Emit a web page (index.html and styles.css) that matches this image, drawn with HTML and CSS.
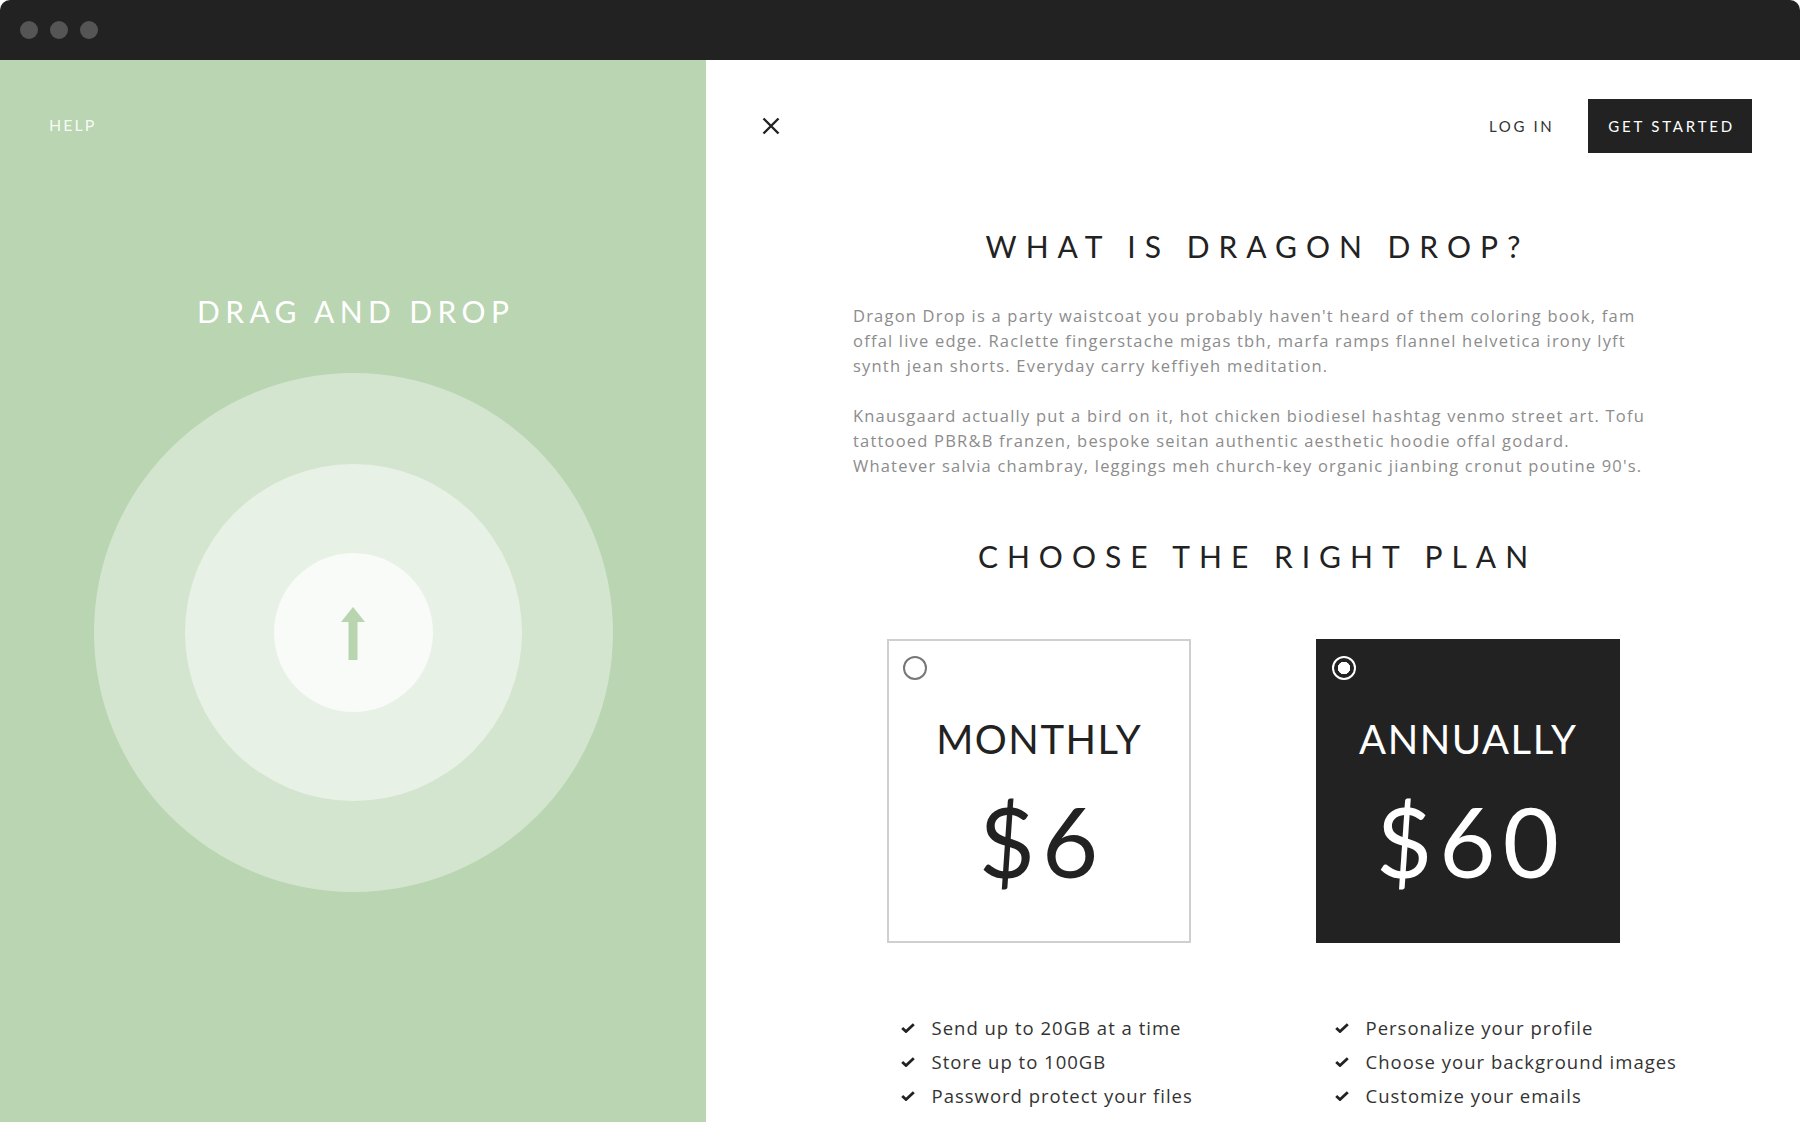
FILE: index.html
```html
<!DOCTYPE html>
<html>
<head>
<meta charset="utf-8">
<link rel="stylesheet" href="styles.css">
</head>
<body>
<div class="window">
  <div class="titlebar">
    <span class="dot"></span><span class="dot"></span><span class="dot"></span>
  </div>
  <div class="main">
    <aside class="side">
      <div class="help">HELP</div>
      <h2 class="side-title">DRAG AND DROP</h2>
      <div class="ring ring-outer">
        <div class="ring ring-mid">
          <div class="ring ring-inner">
            <svg class="arrow" width="24" height="53" viewBox="0 0 24 53"><path d="M12 0 L24 15 L16.5 15 L16.5 53 L7.5 53 L7.5 15 L0 15 Z" fill="#b9d5b0"/></svg>
          </div>
        </div>
      </div>
    </aside>
    <section class="content">
      <header class="topnav">
        <svg class="close" width="18" height="18" viewBox="0 0 18 18"><path d="M1.5 1.5 L16.5 16.5 M16.5 1.5 L1.5 16.5" stroke="#222" stroke-width="2.4" fill="none"/></svg>
        <nav class="navlinks">
          <a class="login">LOG IN</a>
          <a class="btn">GET STARTED</a>
        </nav>
      </header>
      <div class="body">
        <h1 class="heading">WHAT IS DRAGON DROP?</h1>
        <p class="para">Dragon Drop is a party waistcoat you probably haven't heard of them coloring book, fam<br>offal live edge. Raclette fingerstache migas tbh, marfa ramps flannel helvetica irony lyft<br>synth jean shorts. Everyday carry keffiyeh meditation.</p>
        <p class="para">Knausgaard actually put a bird on it, hot chicken biodiesel hashtag venmo street art. Tofu<br>tattooed PBR&amp;B franzen, bespoke seitan authentic aesthetic hoodie offal godard.<br>Whatever salvia chambray, leggings meh church-key organic jianbing cronut poutine 90's.</p>
        <h1 class="heading heading-plan">CHOOSE THE RIGHT PLAN</h1>
        <div class="plans">
          <div class="plan-col">
            <div class="card">
              <span class="radio"></span>
              <div class="card-title">MONTHLY</div>
              <div class="price">$6</div>
            </div>
            <ul class="features">
              <li><svg class="check" viewBox="0 0 14 10"><path d="M1.2 5 L5 8.5 L12.8 1.2" stroke="#222" stroke-width="2.8" fill="none"/></svg>Send up to 20GB at a time</li>
              <li><svg class="check" viewBox="0 0 14 10"><path d="M1.2 5 L5 8.5 L12.8 1.2" stroke="#222" stroke-width="2.8" fill="none"/></svg>Store up to 100GB</li>
              <li><svg class="check" viewBox="0 0 14 10"><path d="M1.2 5 L5 8.5 L12.8 1.2" stroke="#222" stroke-width="2.8" fill="none"/></svg>Password protect your files</li>
            </ul>
          </div>
          <div class="plan-col">
            <div class="card card-dark">
              <span class="radio radio-on"></span>
              <div class="card-title">ANNUALLY</div>
              <div class="price">$60</div>
            </div>
            <ul class="features">
              <li><svg class="check" viewBox="0 0 14 10"><path d="M1.2 5 L5 8.5 L12.8 1.2" stroke="#222" stroke-width="2.8" fill="none"/></svg>Personalize your profile</li>
              <li><svg class="check" viewBox="0 0 14 10"><path d="M1.2 5 L5 8.5 L12.8 1.2" stroke="#222" stroke-width="2.8" fill="none"/></svg>Choose your background images</li>
              <li><svg class="check" viewBox="0 0 14 10"><path d="M1.2 5 L5 8.5 L12.8 1.2" stroke="#222" stroke-width="2.8" fill="none"/></svg>Customize your emails</li>
            </ul>
          </div>
        </div>
      </div>
    </section>
  </div>
</div>
</body>
</html>
```
FILE: styles.css
```css
* { box-sizing: border-box; }
html, body { margin: 0; padding: 0; background: #fff; }
body { font-family: Lato, "Open Sans", sans-serif; width: 1800px; height: 1122px; overflow: hidden; }
.window { width: 1800px; height: 1122px; display: flex; flex-direction: column; }
.titlebar { height: 60px; background: #222; border-radius: 10px 10px 0 0; display: flex; align-items: center; gap: 12px; padding-left: 20px; flex-shrink: 0; }
.dot { width: 18px; height: 18px; border-radius: 50%; background: #555; }
.main { flex: 1; display: flex; min-height: 0; }
.side { width: 706px; flex-shrink: 0; background: #bad5b1; display: flex; flex-direction: column; align-items: center; padding-top: 55px; }
.help { align-self: flex-start; margin-left: 49px; font-size: 16px; line-height: 20px; letter-spacing: 2px; color: rgba(255,255,255,0.9); }
.side-title { margin: 158px 0 0; font-weight: 400; font-size: 30px; line-height: 36px; letter-spacing: 5.4px; margin-right: -5.4px; color: #fff; }
.ring { border-radius: 50%; display: flex; align-items: center; justify-content: center; flex-shrink: 0; }
.ring-outer { width: 519px; height: 519px; background: #d4e5cf; margin-top: 44px; }
.ring-mid { width: 337px; height: 337px; background: #e8f1e5; }
.ring-inner { width: 159px; height: 159px; background: #f8fbf7; }
.arrow { display: block; margin-top: 1px; }
.content { flex: 1; display: flex; flex-direction: column; padding-top: 39px; }
.topnav { display: flex; align-items: center; justify-content: space-between; height: 54px; padding: 0 48px 0 56px; }
.close { display: block; }
.navlinks { display: flex; align-items: center; gap: 34px; }
.login { font-size: 15px; letter-spacing: 2.6px; color: #333; }
.btn { display: block; background: #222; color: #fff; font-size: 15px; letter-spacing: 2.8px; height: 54px; line-height: 54px; padding: 0 17px 0 20px; }
.body { width: 800px; margin: 0 auto; display: flex; flex-direction: column; align-items: center; }
.heading { margin: 75px -9px 0 0; font-weight: 400; font-size: 30px; line-height: 36px; letter-spacing: 9px; color: #222; text-align: center; }
.para { margin: 39px 0 0; align-self: stretch; font-family: "Open Sans", Lato, sans-serif; font-size: 16.5px; line-height: 25px; letter-spacing: 1.2px; color: #8c8c8c; font-weight: 400; white-space: nowrap; }
.para + .para { margin-top: 25px; }
.heading-plan { margin-top: 60px; }
.plans { display: flex; gap: 125px; margin-top: 65px; }
.plan-col { width: 304px; }
.card { width: 304px; height: 304px; border: 2px solid #cfcfcf; padding: 15px 14px; display: flex; flex-direction: column; align-items: center; color: #222; }
.card-dark { background: #222; border-color: #222; color: #fff; }
.radio { align-self: flex-start; width: 24px; height: 24px; border-radius: 50%; border: 2px solid #777; }
.radio-on { border-color: #fff; background: radial-gradient(circle, #fff 0 6px, transparent 6.5px); }
.card-title { margin-top: 35px; font-size: 40px; line-height: 48px; letter-spacing: 1.5px; margin-right: -1.5px; }
.price { margin-top: 29px; font-size: 97px; line-height: 97px; letter-spacing: 7px; margin-right: -7px; }
.features { list-style: none; margin: 68px 0 0; padding: 0 0 0 14px; }
.plan-col:last-child .features { padding-left: 19px; }
.features li { display: flex; align-items: center; font-family: "Open Sans", Lato, sans-serif; font-size: 18.5px; line-height: 34px; letter-spacing: 1px; color: #333; white-space: nowrap; }
.check { width: 14px; height: 10px; margin-right: 17px; flex-shrink: 0; }
```
